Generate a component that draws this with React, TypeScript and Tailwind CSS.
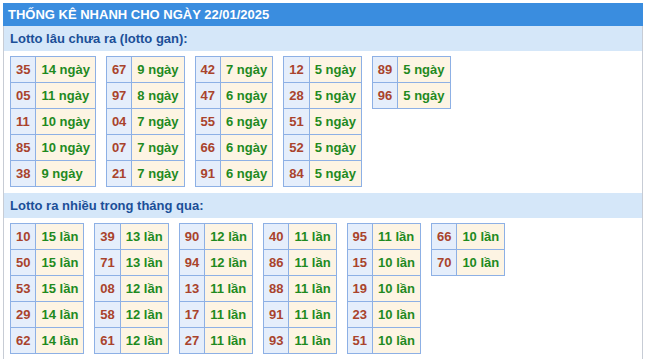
import React from 'react';

type Row = [string, string];

const ganTables: Row[][] = [
  [['35', '14 ngày'], ['05', '11 ngày'], ['11', '10 ngày'], ['85', '10 ngày'], ['38', '9 ngày']],
  [['67', '9 ngày'], ['97', '8 ngày'], ['04', '7 ngày'], ['07', '7 ngày'], ['21', '7 ngày']],
  [['42', '7 ngày'], ['47', '6 ngày'], ['55', '6 ngày'], ['66', '6 ngày'], ['91', '6 ngày']],
  [['12', '5 ngày'], ['28', '5 ngày'], ['51', '5 ngày'], ['52', '5 ngày'], ['84', '5 ngày']],
  [['89', '5 ngày'], ['96', '5 ngày']],
];

const hotTables: Row[][] = [
  [['10', '15 lần'], ['50', '15 lần'], ['53', '15 lần'], ['29', '14 lần'], ['62', '14 lần']],
  [['39', '13 lần'], ['71', '13 lần'], ['08', '12 lần'], ['58', '12 lần'], ['61', '12 lần']],
  [['90', '12 lần'], ['94', '12 lần'], ['13', '11 lần'], ['17', '11 lần'], ['27', '11 lần']],
  [['40', '11 lần'], ['86', '11 lần'], ['88', '11 lần'], ['91', '11 lần'], ['93', '11 lần']],
  [['95', '11 lần'], ['15', '10 lần'], ['19', '10 lần'], ['23', '10 lần'], ['51', '10 lần']],
  [['66', '10 lần'], ['70', '10 lần']],
];

const StatTable: React.FC<{ rows: Row[] }> = ({ rows }) => (
  <table className="border-collapse">
    <tbody>
      {rows.map(([num, val], i) => (
        <tr key={i}>
          <td className="h-[26px] border border-[#8db0e5] bg-[#e5eefb] px-[5px] text-[#a9432c]">{num}</td>
          <td className="h-[26px] border border-[#8db0e5] bg-[#fdf4e3] px-[5px] text-[#1f8a1f]">{val}</td>
        </tr>
      ))}
    </tbody>
  </table>
);

const Section: React.FC<{ title: string; tables: Row[][] }> = ({ title, tables }) => (
  <div>
    <div className="flex h-[25px] items-center bg-[#d5e7f9] pl-[6px] text-[#1b4f98]">{title}</div>
    <div className="flex items-start gap-[10px] pl-[6px] pt-[5px] pb-[6px]">
      {tables.map((rows, i) => (
        <StatTable key={i} rows={rows} />
      ))}
    </div>
  </div>
);

export default function App() {
  return (
    <div className="min-h-[359px] bg-white pl-[3px] pt-[3px] font-['Liberation_Sans',Arial,sans-serif] text-[13px] font-bold">
      <div className="w-[640px]">
        <div className="flex h-[23px] items-center bg-[#3a8ddf] pl-[5px] text-white">
          THỐNG KÊ NHANH CHO NGÀY 22/01/2025
        </div>
        <div className="min-h-[333px] border-x border-[#c7ccd5]">
          <Section title="Lotto lâu chưa ra (lotto gan):" tables={ganTables} />
          <Section title="Lotto ra nhiều trong tháng qua:" tables={hotTables} />
        </div>
      </div>
    </div>
  );
}
